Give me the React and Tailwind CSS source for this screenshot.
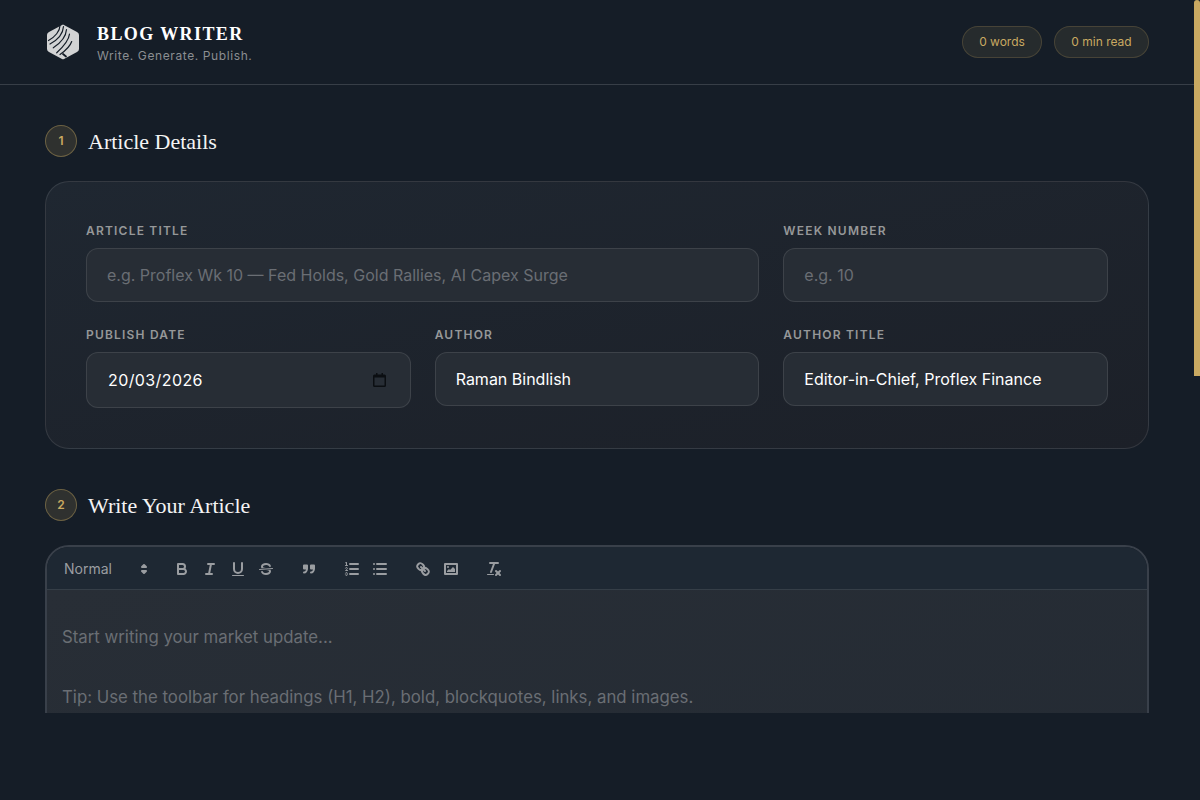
import React from "react";

const serif = "font-['Liberation_Serif',serif]";

const Logo = () => (
  <svg viewBox="0 0 36 36" className="w-9 h-9 shrink-0">
    <path d="M18 .5 L32 8 Q34 9 34 11 L34 25 Q34 27 32 28 L19 35 Q18 35.5 17 35 L4 28 Q2 27 2 25 L2 11 Q2 9 4 8 Z" fill="#d2d3d4" />
    <g fill="none" stroke="#151d27" strokeWidth="1.2" strokeLinecap="round">
      <path d="M15 1.5 C15 7 10 13 3.5 16.5" />
      <path d="M18.5 2.5 C18 10 12.5 16 5 20" />
      <path d="M21.5 5.5 C21 13 15.5 19 8.3 23.8" />
      <path d="M24.5 10 C23.8 17 18 23 11.7 28.8" />
      <path d="M26.7 17.5 C25 22.5 20 27 15 30.5" />
      <path d="M18 30 L21 32.5" strokeWidth="1.8" />
    </g>
  </svg>
);

const Step = ({ n, title }) => (
  <div className="flex items-center gap-[11px] mb-6">
    <span className="w-8 h-8 rounded-full flex items-center justify-center border border-[#c9a961]/40 bg-[#c9a961]/15 text-[#c9a961] text-xs font-semibold">
      {n}
    </span>
    <h2 className={`${serif} pt-0.5 text-[22px] leading-[30px] text-[#f4f4f4]`}>{title}</h2>
  </div>
);

const Label = ({ children }) => (
  <label className="block mb-2 text-xs leading-[18px] font-semibold tracking-[0.1em] uppercase text-[#969899]">
    {children}
  </label>
);

const Field = ({ label, className = "", ...props }) => (
  <div className={className}>
    <Label>{label}</Label>
    <input
      {...props}
      className="w-full px-5 py-3.5 rounded-xl border border-white/10 bg-[#272d35] text-base leading-6 text-white placeholder:text-[#6a6e74] outline-none"
    />
  </div>
);

const DateField = ({ label, value }) => (
  <div>
    <Label>{label}</Label>
    <div className="flex items-center h-14 pl-[21px] pr-6 rounded-xl border border-white/10 bg-[#272d35]">
      <input defaultValue={value} className="flex-1 min-w-0 text-base tracking-[0.4px] text-white outline-none" />
      <svg viewBox="0 0 13 14" className="w-[13px] h-[14px] shrink-0">
        <path
          fillRule="evenodd"
          fill="#0b0e12"
          d="M3 0h1.5v1.5h4V0H10v1.5h1.5A1.5 1.5 0 0 1 13 3v9.5A1.5 1.5 0 0 1 11.5 14h-10A1.5 1.5 0 0 1 0 12.5V3a1.5 1.5 0 0 1 1.5-1.5H3V0Z M1.5 4.5v8h10v-8h-10Z"
        />
      </svg>
    </div>
  </div>
);

const ToolButton = ({ children }) => (
  <button className="w-7 h-6 px-[5px] py-[3px] shrink-0">
    <svg
      viewBox="0 0 18 18"
      className="w-[18px] h-[18px]"
      fill="none"
      stroke="#9a9da1"
      strokeWidth="2"
      strokeLinecap="round"
      strokeLinejoin="round"
    >
      {children}
    </svg>
  </button>
);

const Toolbar = () => (
  <div className="flex items-center h-[43px] px-2 pt-0.5 border-b border-white/10 bg-[#1e2833]">
    <div className="relative flex items-center w-[98px] h-6 mr-[15px] pl-[9px] text-sm text-[#9a9da1]">
      Normal
      <svg viewBox="0 0 18 18" className="absolute right-0 top-[3px] w-[18px] h-[18px]" fill="#9a9da1" stroke="#9a9da1" strokeWidth="2" strokeLinejoin="round">
        <polygon points="7 11 9 13 11 11 7 11" />
        <polygon points="7 7 9 5 11 7 7 7" />
      </svg>
    </div>
    <div className="flex mr-[15px]">
      <ToolButton>
        <path d="M5,4H9.5A2.5,2.5,0,0,1,12,6.5v0A2.5,2.5,0,0,1,9.5,9H5V4Z" />
        <path d="M5,9h5.5A2.5,2.5,0,0,1,13,11.5v0A2.5,2.5,0,0,1,10.5,14H5V9Z" />
      </ToolButton>
      <ToolButton>
        <line x1="7" x2="13" y1="4" y2="4" />
        <line x1="5" x2="11" y1="14" y2="14" />
        <line x1="8" x2="10" y1="14" y2="4" />
      </ToolButton>
      <ToolButton>
        <path d="M5,3V9a4.012,4.012,0,0,0,4,4H9a4.012,4.012,0,0,0,4-4V3" />
        <rect height="1" rx="0.5" ry="0.5" width="12" x="3" y="15" fill="#9a9da1" stroke="none" />
      </ToolButton>
      <ToolButton>
        <line x1="15.5" x2="2.5" y1="8.5" y2="9.5" strokeWidth="1" />
        <path d="M9.007,8C6.542,7.791,6,7.519,6,6.5,6,5.792,7.283,5,9,5c1.571,0,2.765.679,2.969,1.309a1,1,0,0,0,1.9-.618C13.356,4.106,11.354,3,9,3,6.2,3,4,4.538,4,6.5a3.2,3.2,0,0,0,.5,1.843Z" fill="#9a9da1" stroke="none" />
        <path d="M8.984,10C11.457,10.208,12,10.479,12,11.5c0,.708-1.283,1.5-3,1.5-1.571,0-2.765-.679-2.969-1.309a1,1,0,1,0-1.9.618C4.644,13.894,6.646,15,9,15c2.8,0,5-1.538,5-3.5a3.2,3.2,0,0,0-.5-1.843Z" fill="#9a9da1" stroke="none" />
      </ToolButton>
    </div>
    <div className="flex mr-[15px]">
      <ToolButton>
        <rect height="3" width="3" x="4" y="5.5" fill="#9a9da1" />
        <rect height="3" width="3" x="11" y="5.5" fill="#9a9da1" />
        <path d="M7,8.5c0,2.21-1.343,4-3,4" />
        <path d="M14,8.5c0,2.21-1.343,4-3,4" />
      </ToolButton>
    </div>
    <div className="flex mr-[15px]">
      <ToolButton>
        <line x1="7" x2="15" y1="4" y2="4" />
        <line x1="7" x2="15" y1="9" y2="9" />
        <line x1="7" x2="15" y1="14" y2="14" />
        <line x1="2.5" x2="4.5" y1="5.5" y2="5.5" strokeWidth="1" />
        <path d="M3.5,6A0.5,0.5,0,0,1,3,5.5V3.085l-0.276.138A0.5,0.5,0,0,1,2.053,3c-0.124-.247-0.023-0.324.224-0.447l1-.5A0.5,0.5,0,0,1,4,2.5v3A0.5,0.5,0,0,1,3.5,6Z" fill="#9a9da1" stroke="none" />
        <path d="M4.5,10.5h-2c0-.234,1.85-1.076,1.85-2.234A0.959,0.959,0,0,0,2.5,8.156" strokeWidth="1" />
        <path d="M2.5,14.846a0.959,0.959,0,0,0,1.85-.109A0.7,0.7,0,0,0,3.75,14a0.688,0.688,0,0,0,.6-0.736,0.959,0.959,0,0,0-1.85-.109" strokeWidth="1" />
      </ToolButton>
      <ToolButton>
        <line x1="6" x2="15" y1="4" y2="4" />
        <line x1="6" x2="15" y1="9" y2="9" />
        <line x1="6" x2="15" y1="14" y2="14" />
        <line x1="3" x2="3" y1="4" y2="4" />
        <line x1="3" x2="3" y1="9" y2="9" />
        <line x1="3" x2="3" y1="14" y2="14" />
      </ToolButton>
    </div>
    <div className="flex mr-[15px]">
      <ToolButton>
        <line x1="7" x2="11" y1="7" y2="11" />
        <path d="M8.9,4.577a3.476,3.476,0,0,1,.36,4.679A3.476,3.476,0,0,1,4.577,8.9C3.185,7.5,2.035,6.4,4.217,4.217S7.5,3.185,8.9,4.577Z" />
        <path d="M13.423,9.1a3.476,3.476,0,0,0-4.679-.36,3.476,3.476,0,0,0,.36,4.679c1.392,1.392,2.5,2.542,4.679.36S14.815,10.5,13.423,9.1Z" />
      </ToolButton>
      <ToolButton>
        <rect height="10" width="12" x="3" y="4" />
        <circle cx="6" cy="7" r="1" fill="#9a9da1" stroke="none" />
        <polyline points="5 12 5 11 7 9 8 10 11 7 13 9 13 12 5 12" fill="#9a9da1" stroke="none" />
      </ToolButton>
    </div>
    <ToolButton>
      <line x1="5" x2="13" y1="3" y2="3" />
      <line x1="6" x2="9.35" y1="12" y2="3" />
      <line x1="11" x2="15" y1="11" y2="15" />
      <line x1="15" x2="11" y1="11" y2="15" />
      <rect height="1" rx="0.5" ry="0.5" width="7" x="2" y="14" fill="#9a9da1" stroke="none" />
    </ToolButton>
  </div>
);

export default function App() {
  return (
    <div className="flex h-screen overflow-hidden bg-[#151d27] font-['Inter',sans-serif]">
      <div className="flex-1 min-w-0">
        <header className="flex items-center justify-between h-[85px] px-[45px] border-b border-white/15">
          <div className="flex items-center gap-4">
            <Logo />
            <div className="pt-0.5">
              <h1 className={`${serif} text-lg leading-6 font-bold tracking-[1.4px] text-white`}>BLOG WRITER</h1>
              <p className="mt-0.5 text-xs leading-4 tracking-[0.05em] text-[#8b8e92]">Write. Generate. Publish.</p>
            </div>
          </div>
          <div className="flex gap-3">
            <span className="w-20 justify-center h-8 flex items-center rounded-full border border-[#c9a961]/20 bg-[#c9a961]/10 text-xs text-[#c9a961]">0 words</span>
            <span className="w-[95px] justify-center h-8 flex items-center rounded-full border border-[#c9a961]/20 bg-[#c9a961]/10 text-xs text-[#c9a961]">0 min read</span>
          </div>
        </header>

        <main className="h-[628px] overflow-hidden px-[45px] pt-10">
          <Step n="1" title="Article Details" />
          <section className="grid grid-cols-3 gap-x-6 gap-y-6 items-start p-10 mb-10 rounded-3xl border border-white/10 bg-gradient-to-br from-[#1f2731] to-[#1c2028]">
            <Field className="col-span-2" label="Article Title" placeholder="e.g. Proflex Wk 10 — Fed Holds, Gold Rallies, AI Capex Surge" />
            <Field label="Week Number" placeholder="e.g. 10" />
            <DateField label="Publish Date" value="20/03/2026" />
            <Field label="Author" defaultValue="Raman Bindlish" />
            <Field label="Author Title" defaultValue="Editor-in-Chief, Proflex Finance" />
          </section>

          <Step n="2" title="Write Your Article" />
          <section className="rounded-t-3xl border-2 border-[#39404a] overflow-hidden">
            <Toolbar />
            <textarea
              readOnly
              className="block w-full h-[400px] px-[15px] pt-[32px] resize-none bg-gradient-to-br from-[#282e36] to-[#232a33] text-[16.8px] leading-[30px] placeholder:text-[#6a6e74] outline-none"
              placeholder={"Start writing your market update...\n\nTip: Use the toolbar for headings (H1, H2), bold, blockquotes, links, and images."}
            />
          </section>
        </main>
      </div>

      <div className="w-1.5 shrink-0">
        <div className="h-[376px] rounded-t-[3px] bg-[#c9a961]" />
      </div>
    </div>
  );
}
